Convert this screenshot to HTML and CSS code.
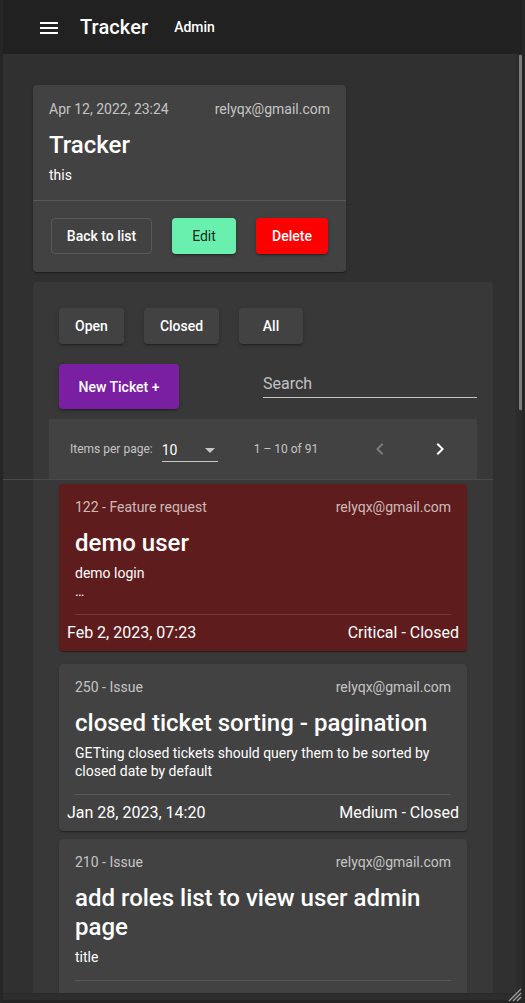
FILE: index.html
```html
<!DOCTYPE html>
<html lang="en">
<head>
<meta charset="utf-8">
<title>Tracker</title>
<link rel="stylesheet" href="styles.css">
</head>
<body>
<div class="window">
  <header class="toolbar">
    <svg class="menu-icon" width="18" height="12" viewBox="0 0 18 12" aria-hidden="true">
      <rect x="0" y="0" width="18" height="2" fill="#fff"/>
      <rect x="0" y="5" width="18" height="2" fill="#fff"/>
      <rect x="0" y="10" width="18" height="2" fill="#fff"/>
    </svg>
    <span class="brand">Tracker</span>
    <span class="nav-link">Admin</span>
  </header>

  <div class="viewport">
    <main class="content">
      <section class="detail-card">
        <div class="detail-body">
          <div class="meta-row">
            <span>Apr 12, 2022, 23:24</span>
            <span>relyqx@gmail.com</span>
          </div>
          <h1 class="detail-title">Tracker</h1>
          <p class="detail-text">this</p>
        </div>
        <div class="detail-actions">
          <button class="btn btn-stroked">Back to list</button>
          <button class="btn btn-edit">Edit</button>
          <button class="btn btn-delete">Delete</button>
        </div>
      </section>

      <section class="list-panel">
        <div class="filter-row">
          <button class="btn btn-raised">Open</button>
          <button class="btn btn-raised">Closed</button>
          <button class="btn btn-raised">All</button>
        </div>

        <div class="action-row">
          <button class="btn btn-new">New Ticket +</button>
          <div class="search-field">Search</div>
        </div>

        <div class="paginator">
          <span class="page-label">Items per page:</span>
          <div class="page-select">
            <span>10</span>
            <svg width="10" height="5" viewBox="0 0 10 5" aria-hidden="true"><path d="M0 0l5 5 5-5z" fill="rgba(255,255,255,0.7)"/></svg>
          </div>
          <span class="range-label">1 – 10 of 91</span>
          <span class="icon-btn disabled">
            <svg width="24" height="24" viewBox="0 0 24 24" aria-hidden="true"><path d="M15.41 7.41L14 6l-6 6 6 6 1.41-1.41L10.83 12z" fill="currentColor"/></svg>
          </span>
          <span class="icon-btn next">
            <svg width="24" height="24" viewBox="0 0 24 24" aria-hidden="true"><path d="M10 6L8.59 7.41 13.17 12l-4.58 4.59L10 18l6-6z" fill="currentColor"/></svg>
          </span>
        </div>
        <div class="wide-divider"></div>

        <div class="ticket-list">
          <article class="ticket ticket-critical">
            <div class="meta-row">
              <span>122 - Feature request</span>
              <span>relyqx@gmail.com</span>
            </div>
            <h2 class="ticket-title">demo user</h2>
            <p class="ticket-desc">demo login<br>…</p>
            <div class="ticket-divider"></div>
            <div class="ticket-footer">
              <span>Feb 2, 2023, 07:23</span>
              <span>Critical - Closed</span>
            </div>
          </article>

          <article class="ticket">
            <div class="meta-row">
              <span>250 - Issue</span>
              <span>relyqx@gmail.com</span>
            </div>
            <h2 class="ticket-title">closed ticket sorting - pagination</h2>
            <p class="ticket-desc">GETting closed tickets should query them to be sorted by closed date by default</p>
            <div class="ticket-divider"></div>
            <div class="ticket-footer">
              <span>Jan 28, 2023, 14:20</span>
              <span>Medium - Closed</span>
            </div>
          </article>

          <article class="ticket ticket-cut">
            <div class="meta-row">
              <span>210 - Issue</span>
              <span>relyqx@gmail.com</span>
            </div>
            <h2 class="ticket-title">add roles list to view user admin page</h2>
            <p class="ticket-desc">title</p>
            <div class="ticket-divider"></div>
            <div class="ticket-footer ticket-footer-empty"></div>
          </article>
        </div>
      </section>
    </main>
    <div class="scroll-track"><div class="scroll-thumb"></div></div>
  </div>

  <div class="h-band"></div>
  <svg class="grip" width="16" height="16" viewBox="0 0 16 16" aria-hidden="true">
    <path d="M15 3L3 15M15 7L7 15M15 11L11 15" stroke="#a0a0a0" stroke-width="1.3"/>
  </svg>
</div>
</body>
</html>
```

FILE: styles.css
```css
* { box-sizing: border-box; }

html, body {
  margin: 0;
  padding: 0;
  background: #262626;
}

body {
  font-family: Roboto, "Noto Sans", "Liberation Sans", sans-serif;
  color: #fff;
}

.window {
  position: relative;
  width: 525px;
  height: 1003px;
  border-left: 3px solid #262626;
  border-right: 3px solid #262626;
  display: flex;
  flex-direction: column;
  overflow: hidden;
}

/* Toolbar */
.toolbar {
  height: 54px;
  flex: 0 0 54px;
  background: #212121;
  display: flex;
  align-items: center;
  padding-left: 37px;
}

.menu-icon { display: block; margin-top: 1px; }

.brand {
  margin-left: 22px;
  font-size: 20px;
  font-weight: 500;
  letter-spacing: 0.1px;
}

.nav-link {
  margin-left: 26px;
  font-size: 14px;
  font-weight: 500;
}

/* Viewport */
.viewport {
  flex: 1;
  display: flex;
  background: #303030;
  overflow: hidden;
}

.content {
  flex: 1;
  padding: 31px 0 0 30px;
  overflow: hidden;
}

.scroll-track {
  width: 6px;
  flex: 0 0 6px;
  padding: 1px 0 0 3px;
  background: #2c2c2c;
}

.scroll-thumb {
  width: 3px;
  height: 355px;
  background: #7c7c7c;
  border-radius: 1px;
}

.h-band {
  flex: 0 0 10px;
  height: 10px;
  background: #2d2d2d;
  border-top: 1px solid #292929;
  border-bottom: 3px solid #242424;
}

.grip {
  position: absolute;
  right: 0;
  bottom: 1px;
}

/* Shared rows */
.meta-row {
  display: flex;
  justify-content: space-between;
  font-size: 14px;
  color: rgba(255, 255, 255, 0.7);
}

/* Detail card */
.detail-card {
  width: 313px;
  background: #424242;
  border-radius: 4px;
  box-shadow: 0 2px 1px -1px rgba(0,0,0,.2), 0 1px 1px 0 rgba(0,0,0,.14), 0 1px 3px 0 rgba(0,0,0,.12);
}

.detail-body {
  padding: 16px 16px 17px;
  border-bottom: 1px solid rgba(255, 255, 255, 0.12);
}

.detail-body .meta-row { line-height: 16px; }

.detail-title {
  margin: 14px 0 0;
  font-size: 24px;
  line-height: 28px;
  font-weight: 500;
}

.detail-text {
  margin: 8px 0 0;
  font-size: 14px;
  line-height: 16px;
}

.detail-actions {
  display: flex;
  gap: 20px;
  padding: 17px 18px 18px;
}

/* Buttons */
.btn {
  flex-shrink: 0;
  height: 36px;
  min-width: 64px;
  padding: 0 16px;
  border: none;
  border-radius: 4px;
  font-family: inherit;
  font-size: 14px;
  font-weight: 500;
  white-space: nowrap;
  color: #fff;
  background: transparent;
  cursor: pointer;
}

.btn-stroked {
  width: 101px;
  padding: 0;
  border: 1px solid rgba(255, 255, 255, 0.12);
}

.btn-edit {
  background: #69f0ae;
  color: rgba(0, 0, 0, 0.87);
  font-weight: 400;
  box-shadow: 0 3px 1px -2px rgba(0,0,0,.2), 0 2px 2px 0 rgba(0,0,0,.14), 0 1px 5px 0 rgba(0,0,0,.12);
}

.btn-delete {
  background: #ff0000;
  width: 72px;
  padding: 0;
  box-shadow: 0 3px 1px -2px rgba(0,0,0,.2), 0 2px 2px 0 rgba(0,0,0,.14), 0 1px 5px 0 rgba(0,0,0,.12);
}

.btn-raised {
  background: #424242;
  padding: 0;
  box-shadow: 0 3px 1px -2px rgba(0,0,0,.2), 0 2px 2px 0 rgba(0,0,0,.14), 0 1px 5px 0 rgba(0,0,0,.12);
}

.btn-new {
  height: 45px;
  width: 120px;
  padding: 0;
  background: #7b1fa2;
  box-shadow: 0 3px 1px -2px rgba(0,0,0,.2), 0 2px 2px 0 rgba(0,0,0,.14), 0 1px 5px 0 rgba(0,0,0,.12);
}

/* List panel */
.list-panel {
  margin-top: 10px;
  width: 460px;
  min-height: 760px;
  background: #383838;
  border-radius: 4px 4px 0 0;
  padding: 26px 16px 0;
}

.filter-row {
  display: flex;
  gap: 20px;
  padding-left: 10px;
}

.filter-row .btn-raised:first-child { width: 65px; }
.filter-row .btn-raised:nth-child(2) { width: 75px; }

.action-row {
  display: flex;
  justify-content: space-between;
  align-items: flex-start;
  margin-top: 20px;
  padding-left: 10px;
}

.search-field {
  width: 214px;
  margin-top: 10px;
  font-size: 16px;
  line-height: 20px;
  padding-bottom: 3px;
  color: rgba(255, 255, 255, 0.7);
  border-bottom: 1px solid rgba(255, 255, 255, 0.7);
}

/* Paginator */
.paginator {
  margin-top: 10px;
  height: 60px;
  background: #424242;
  display: flex;
  align-items: center;
  padding-left: 21px;
  color: rgba(255, 255, 255, 0.7);
}

.page-label {
  font-size: 12px;
}

.page-select {
  margin-left: 9px;
  margin-top: 6px;
  width: 56px;
  display: flex;
  justify-content: space-between;
  align-items: center;
  padding: 0 3px 3px 0;
  font-size: 14px;
  line-height: 16px;
  color: #fff;
  border-bottom: 1px solid rgba(255, 255, 255, 0.7);
}

.range-label {
  margin-left: 36px;
  font-size: 12px;
}

.icon-btn {
  width: 40px;
  height: 40px;
  display: flex;
  align-items: center;
  justify-content: center;
  color: #fff;
}

.icon-btn.disabled {
  margin-left: 42px;
  color: rgba(255, 255, 255, 0.3);
}

.icon-btn.next { margin-left: 20px; }

.wide-divider {
  height: 1px;
  margin: 0 -16px 0 -46px;
  background: #4a4a4a;
}

/* Tickets */
.ticket-list {
  display: flex;
  flex-direction: column;
  gap: 13px;
  padding: 4px 10px 0;
}

.ticket {
  background: #424242;
  border-radius: 4px;
  padding: 14px 16px 8px;
  box-shadow: 0 2px 1px -1px rgba(0,0,0,.2), 0 1px 1px 0 rgba(0,0,0,.14), 0 1px 3px 0 rgba(0,0,0,.12);
}

.ticket-critical { background: #5f1c1d; }

.ticket-cut { margin-top: -5px; }

.ticket .meta-row { line-height: 18px; }

.ticket-title {
  margin: 12px 0 0;
  font-size: 24px;
  line-height: 30px;
  font-weight: 500;
}

.ticket-cut .ticket-title { line-height: 29px; margin-top: 13px; }

.ticket-desc {
  margin: 6px 0 0;
  font-size: 14px;
  line-height: 18px;
}

.ticket-divider {
  margin-top: 14px;
  height: 1px;
  background: rgba(255, 255, 255, 0.12);
}

.ticket-footer {
  display: flex;
  justify-content: space-between;
  margin: 8px -8px 0;
  font-size: 16px;
  line-height: 20px;
}

.ticket-footer-empty { height: 20px; }
```
